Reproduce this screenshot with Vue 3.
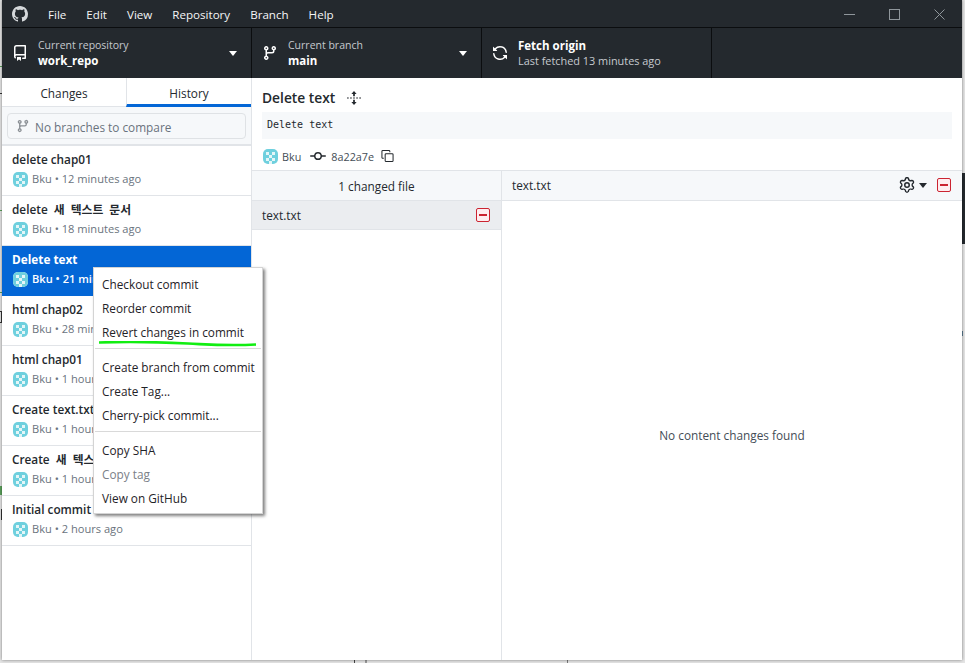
<script setup>
const commits = [
  { title: 'delete chap01', meta: '12 minutes ago' },
  { title: 'delete 새 텍스트 문서', meta: '18 minutes ago', ko: true },
  { title: 'Delete text', meta: '21 minutes ago', selected: true },
  { title: 'html chap02', meta: '28 minutes ago' },
  { title: 'html chap01', meta: '1 hour ago' },
  { title: 'Create text.txt', meta: '1 hour ago' },
  { title: 'Create 새 텍스트 문서', meta: '1 hour ago', ko: true },
  { title: 'Initial commit', meta: '2 hours ago' }
]
const menus = ['File', 'Edit', 'View', 'Repository', 'Branch', 'Help']
const avatarCells = [
  [1,1,1,1,1],
  [1,0,1,0,1],
  [1,1,0,1,1],
  [1,0,1,0,1],
  [1,1,0,1,1]
]
const groups = [
  [{ t: 'Checkout commit' }, { t: 'Reorder commit' }, { t: 'Revert changes in commit', mark: true }],
  [{ t: 'Create branch from commit' }, { t: 'Create Tag...' }, { t: 'Cherry-pick commit...' }],
  [{ t: 'Copy SHA' }, { t: 'Copy tag', off: true }, { t: 'View on GitHub' }]
]
const behind = [
  { x: 0, y: 66, w: 2, h: 1, c: '#5aa05a' },
  { x: 0, y: 93, w: 2, h: 1, c: '#333' },
  { x: 0, y: 210, w: 2, h: 1, c: '#5aa05a' },
  { x: 0, y: 292, w: 2, h: 1, c: '#5aa05a' },
  { x: 0, y: 311, w: 2, h: 1, c: '#333' },
  { x: 1, y: 311, w: 1, h: 11, c: '#333' },
  { x: 0, y: 322, w: 2, h: 1, c: '#333' },
  { x: 0, y: 486, w: 2, h: 9, c: '#5aa05a' },
  { x: 1, y: 509, w: 1, h: 11, c: '#333' },
  { x: 962, y: 173, w: 3, h: 71, c: '#24292e' },
  { x: 962, y: 331, w: 1, h: 5, c: '#5a7a90' },
  { x: 354, y: 660, w: 1, h: 3, c: '#444' },
  { x: 365, y: 660, w: 2, h: 3, c: '#999' },
  { x: 567, y: 660, w: 1, h: 3, c: '#777' }
]
</script>

<template>
  <div class="screen">
    <span v-for="(b, i) in behind" :key="i" class="behind" :style="{ left: b.x + 'px', top: b.y + 'px', width: b.w + 'px', height: b.h + 'px', background: b.c }"></span>
    <div class="window">
      <header class="titlebar">
        <svg class="logo" viewBox="0 0 16 16" width="16" height="16"><path fill="#d5d8db" d="M8 0C3.58 0 0 3.58 0 8c0 3.54 2.29 6.53 5.47 7.59.4.07.55-.17.55-.38 0-.19-.01-.82-.01-1.49-2.01.37-2.53-.49-2.69-.94-.09-.23-.48-.94-.82-1.13-.28-.15-.68-.52-.01-.53.63-.01 1.08.58 1.23.82.72 1.21 1.87.87 2.33.66.07-.52.28-.87.51-1.07-1.78-.2-3.64-.89-3.64-3.95 0-.87.31-1.59.82-2.15-.08-.2-.36-1.02.08-2.12 0 0 .67-.21 2.2.82.64-.18 1.32-.27 2-.27s1.36.09 2 .27c1.53-1.04 2.2-.82 2.2-.82.44 1.1.16 1.92.08 2.12.51.56.82 1.27.82 2.15 0 3.07-1.87 3.75-3.65 3.95.29.25.54.73.54 1.48 0 1.07-.01 1.93-.01 2.2 0 .21.15.46.55.38A8.01 8.01 0 0016 8c0-4.42-3.58-8-8-8z"/></svg>
        <nav class="menus"><span v-for="m in menus" :key="m">{{ m }}</span></nav>
        <div class="winctl">
          <svg width="11" height="11" viewBox="0 0 11 11"><path d="M0 5.500h11" stroke="#8f969b" fill="none"/></svg>
          <svg width="11" height="11" viewBox="0 0 11 11"><rect x=".5" y=".5" width="10" height="10" stroke="#8f969b" fill="none"/></svg>
          <svg width="11" height="11" viewBox="0 0 11 11"><path d="M.5.500l10 10M10.500.500l-10 10" stroke="#8f969b" fill="none"/></svg>
        </div>
      </header>

      <div class="toolbar">
        <div class="tool wide">
          <svg class="tool-icon" viewBox="0 0 16 16" width="16" height="16"><path fill="#fff" fill-rule="evenodd" d="M2 2.5A2.5 2.5 0 014.5 0h8.75a.75.75 0 01.75.75v12.5a.75.75 0 01-.75.75h-2.5a.75.75 0 110-1.5h1.75v-2h-8a1 1 0 00-.714 1.7.75.75 0 01-1.072 1.05A2.495 2.495 0 012 11.5v-9zm10.5-1V9h-8c-.356 0-.694.074-1 .208V2.5a1 1 0 011-1h8zM5 12.25v3.25a.25.25 0 00.4.2l1.45-1.087a.25.25 0 01.3 0L8.6 15.7a.25.25 0 00.4-.2v-3.25a.25.25 0 00-.25-.25h-3.5a.25.25 0 00-.25.25z"/></svg>
          <div class="tool-text"><small class="label">Current repository</small><b>work_repo</b></div>
          <i class="caret"></i>
        </div>
        <div class="tool wide">
          <svg class="tool-icon branch" viewBox="0 0 16 16" width="16" height="16"><path fill="#fff" fill-rule="evenodd" d="M11.75 2.5a.75.75 0 100 1.5.75.75 0 000-1.5zm-2.25.75a2.25 2.25 0 113 2.122V6A2.5 2.5 0 0110 8.5H6a1 1 0 00-1 1v1.128a2.251 2.251 0 11-1.5 0V5.372a2.25 2.25 0 111.5 0v1.836A2.492 2.492 0 016 7h4a1 1 0 001-1v-.628A2.25 2.25 0 019.5 3.25zM4.25 12a.75.75 0 100 1.5.75.75 0 000-1.5zM3.5 3.25a.75.75 0 111.5 0 .75.75 0 01-1.5 0z"/></svg>
          <div class="tool-text"><small class="label">Current branch</small><b>main</b></div>
          <i class="caret"></i>
        </div>
        <div class="tool fetch">
          <svg class="tool-icon" viewBox="0 0 16 16" width="16" height="16"><path fill="#fff" fill-rule="evenodd" d="M8 2.5a5.487 5.487 0 00-4.131 1.869l1.204 1.204A.25.25 0 014.896 6H1.25A.25.25 0 011 5.75V2.104a.25.25 0 01.427-.177l1.38 1.38A7.001 7.001 0 0114.95 7.16a.75.75 0 11-1.49.178A5.501 5.501 0 008 2.5zM1.705 8.005a.75.75 0 01.834.656 5.501 5.501 0 009.592 2.97l-1.204-1.204a.25.25 0 01.177-.427h3.646a.25.25 0 01.25.25v3.646a.25.25 0 01-.427.177l-1.38-1.38A7.001 7.001 0 011.05 8.84a.75.75 0 01.656-.834z"/></svg>
          <div class="tool-text"><b class="fetch-title">Fetch origin</b><small>Last fetched 13 minutes ago</small></div>
        </div>
      </div>

      <div class="body">
        <aside class="sidebar">
          <div class="tabs">
            <div class="tab">Changes</div>
            <div class="tab active">History</div>
          </div>
          <div class="filter">
            <div class="filter-box">
              <svg viewBox="0 0 16 16" width="14" height="14"><path fill="#8b9095" fill-rule="evenodd" d="M11.75 2.5a.75.75 0 100 1.5.75.75 0 000-1.5zm-2.25.75a2.25 2.25 0 113 2.122V6A2.5 2.5 0 0110 8.5H6a1 1 0 00-1 1v1.128a2.251 2.251 0 11-1.5 0V5.372a2.25 2.25 0 111.5 0v1.836A2.492 2.492 0 016 7h4a1 1 0 001-1v-.628A2.25 2.25 0 019.5 3.25zM4.25 12a.75.75 0 100 1.5.75.75 0 000-1.5zM3.5 3.25a.75.75 0 111.5 0 .75.75 0 01-1.5 0z"/></svg>
              <span>No branches to compare</span>
            </div>
          </div>
          <div class="commits">
            <div v-for="c in commits" :key="c.title" class="commit" :class="{ selected: c.selected }">
              <div class="commit-title" :class="{ ko: c.ko }">{{ c.title }}</div>
              <div class="commit-meta">
                <svg class="avatar" viewBox="0 0 5 5" width="15" height="15" shape-rendering="crispEdges">
                  <rect width="5" height="5" fill="#e4f6f8"/>
                  <template v-for="(row, y) in avatarCells" :key="y">
                    <rect v-for="(v, x) in row" v-show="v" :key="x" :x="x" :y="y" width="1" height="1" fill="#6fd0de"/>
                  </template>
                </svg>
                <span>Bku • {{ c.meta }}</span>
              </div>
            </div>
          </div>
        </aside>

        <main class="detail">
          <div class="summary">
            <div class="summary-title">
              <span>Delete text</span>
              <svg viewBox="0 0 16 16" width="14" height="14"><path fill="#24292e" d="M8 0l3 3.5H9V6H7V3.5H5zM8 16l-3-3.5h2V10h2v2.5h2z"/><path fill="#24292e" d="M0 7.5h2v1H0zM3.5 7.5h2v1h-2zM7 7.5h2v1H7zM10.500 7.500h2v1h-2zM14 7.500h2v1h-2z"/></svg>
            </div>
            <div class="summary-body">Delete text</div>
            <div class="summary-meta">
              <svg class="avatar meta-avatar" viewBox="0 0 5 5" width="15" height="15" shape-rendering="crispEdges">
                <rect width="5" height="5" fill="#e4f6f8"/>
                <template v-for="(row, y) in avatarCells" :key="y">
                  <rect v-for="(v, x) in row" v-show="v" :key="x" :x="x" :y="y" width="1" height="1" fill="#6fd0de"/>
                </template>
              </svg>
              <span class="who">Bku</span>
              <svg viewBox="0 0 16 16" width="16" height="16"><path fill="#24292e" fill-rule="evenodd" d="M10.5 8a2.5 2.5 0 11-5 0 2.500 2.500 0 015 0zm1.450.75a4 4 0 01-7.900 0H.75a.75.750 0 010-1.500h3.300a4 4 0 017.900 0h3.300a.75.750 0 010 1.500h-3.300z"/></svg>
              <span class="sha">8a22a7e</span>
              <svg class="copy" viewBox="0 0 14 14" width="13" height="14"><path fill="none" stroke="#24292e" stroke-width="1.100" d="M3 9.500H2a1 1 0 01-1-1V2a1 1 0 011-1h6.500a1 1 0 011 1v1"/><rect x="4.500" y="4.500" width="8.500" height="8.500" rx="1" fill="none" stroke="#24292e" stroke-width="1.100"/></svg>
            </div>
          </div>
          <div class="split">
            <div class="files">
              <div class="files-head"><span>1 changed file</span></div>
              <div class="file-row">
                <span>text.txt</span>
                <span class="removed"><i></i></span>
              </div>
            </div>
            <div class="diff">
              <div class="diff-head">
                <span>text.txt</span>
                <div class="diff-tools">
                  <svg viewBox="0 0 16 16" width="16" height="16"><path fill="#24292e" fill-rule="evenodd" d="M7.429 1.525a6.593 6.593 0 011.142 0c.036.003.108.036.137.146l.289 1.105c.147.560.550.967.997 1.189.174.086.341.183.501.290.417.278.970.423 1.530.27l1.102-.303c.110-.030.175.016.195.046.219.310.410.640.573.989.014.031.022.110-.059.190l-.815.806c-.411.406-.562.957-.530 1.456a4.588 4.588 0 010 .582c-.032.499.119 1.050.530 1.456l.815.806c.08.080.073.159.059.190a6.494 6.494 0 01-.573.990c-.020.029-.086.074-.195.045l-1.103-.303c-.559-.153-1.112-.008-1.529.270-.160.107-.327.204-.500.290-.449.222-.851.628-.998 1.189l-.289 1.105c-.029.110-.101.143-.137.146a6.613 6.613 0 01-1.142 0c-.036-.003-.108-.037-.137-.146l-.289-1.105c-.147-.560-.550-.967-.997-1.189a4.502 4.502 0 01-.501-.290c-.417-.278-.970-.423-1.530-.270l-1.102.303c-.110.030-.175-.016-.195-.046a6.492 6.492 0 01-.573-.989c-.014-.031-.022-.110.059-.190l.815-.806c.411-.406.562-.957.530-1.456a4.587 4.587 0 010-.582c.032-.499-.119-1.050-.530-1.456l-.815-.806c-.080-.080-.073-.159-.059-.190a6.440 6.440 0 01.573-.990c.020-.029.086-.075.195-.045l1.103.303c.559.153 1.112.008 1.529-.270.160-.107.327-.204.500-.290.449-.222.851-.628.998-1.189l.289-1.105c.029-.110.101-.143.137-.146zM8 0c-.236 0-.470.012-.701.036-.740.077-1.250.650-1.411 1.260l-.289 1.106c-.017.065-.074.139-.186.195a5.980 5.980 0 00-.663.383c-.104.070-.197.083-.261.066l-1.103-.303c-.610-.167-1.360-.020-1.790.580a7.992 7.992 0 00-.704 1.217c-.310.675-.067 1.400.380 1.843l.815.806c.048.047.083.134.075.260a6.100 6.100 0 000 .772c.008.126-.027.213-.075.260l-.815.806c-.447.443-.690 1.168-.380 1.843.197.430.433.836.704 1.217.430.600 1.180.747 1.790.580l1.103-.303c.064-.017.157-.004.261.066.210.141.432.269.663.383.112.056.170.130.186.195l.289 1.106c.161.610.671 1.183 1.411 1.260a8.094 8.094 0 001.402 0c.740-.077 1.250-.650 1.411-1.260l.289-1.106c.017-.065.074-.139.186-.195a5.980 5.980 0 00.663-.383c.104-.070.197-.083.261-.066l1.103.303c.610.167 1.360.020 1.790-.580.271-.381.507-.787.704-1.217.310-.675.067-1.400-.380-1.843l-.815-.806c-.048-.047-.083-.134-.075-.260a6.100 6.100 0 000-.772c-.008-.126.027-.213.075-.260l.815-.806c.447-.443.690-1.168.380-1.843a7.992 7.992 0 00-.704-1.217c-.430-.600-1.180-.747-1.790-.580l-1.103.303c-.064.017-.157.004-.261-.066a5.980 5.980 0 00-.663-.383c-.112-.056-.170-.130-.186-.195l-.289-1.106C9.951.686 9.441.113 8.701.036A8.094 8.094 0 008 0zm0 5a3 3 0 100 6 3 3 0 000-6zM6.500 8a1.500 1.500 0 113 0 1.500 1.500 0 01-3 0z"/></svg>
                  <i class="caret dark"></i>
                  <span class="removed"><i></i></span>
                </div>
              </div>
              <div class="diff-empty">No content changes found</div>
            </div>
          </div>
        </main>
      </div>

      <div class="menu">
        <div v-for="(g, gi) in groups" :key="gi" class="menu-group">
          <div v-for="item in g" :key="item.t" class="menu-item" :class="{ off: item.off }">
            {{ item.t }}
            <svg v-if="item.mark" class="scribble" viewBox="0 0 160 6" width="160" height="6"><path d="M1 1.500C30 .5 60 1 90 2.500S130 5 158 3.500" stroke="#12ee12" stroke-width="2.600" fill="none"/></svg>
          </div>
        </div>
      </div>
    </div>
  </div>
</template>

<style>
html, body { margin: 0; background: #e4e4e4; overflow: hidden; }
</style>

<style scoped>
.screen {
  position: relative;
  width: 965px;
  height: 663px;
  padding: 0 3px 3px 2px;
  box-sizing: border-box;
  background: #e4e4e4;
  font-family: "Open Sans", "Noto Sans CJK KR", sans-serif;
  font-size: 11.8px;
  color: #24292e;
  overflow: hidden;
}
.behind { position: absolute; }
.window { position: relative; height: 660px; display: flex; flex-direction: column; background: #fff; box-shadow: 0 0 3px rgba(0,0,0,.45); }
.titlebar {
  height: 28px; flex: none; box-sizing: border-box; display: flex; align-items: center; background: #24292e;
  border-bottom: 1px solid #0b0d0f; padding-left: 10px;
}
.logo { margin-top: 1px; }
.menus { display: flex; gap: 20px; margin-left: 20px; padding-top: 1px; font-size: 11.6px; color: #f4f5f6; }
.winctl { margin-left: auto; display: flex; gap: 34px; padding-right: 17px; padding-top: 1px; }
.toolbar { height: 50px; flex: none; display: flex; background: #24292e; color: #fff; }
.tool { display: flex; align-items: center; padding: 0 10px; border-right: 1px solid #0b0d0f; box-sizing: border-box; position: relative; }
.wide { width: 250px; }
.wide + .wide { width: 230px; }
.fetch { width: 230px; }
.tool-icon { flex: none; margin-right: 10px; }
.tool-text { display: flex; flex-direction: column; line-height: 15px; }
.tool-text small { font-size: 10.900px; color: #c6cace; }
.tool-text small.label { font-size: 10.500px; }
.tool-text b { font-weight: 700; font-size: 11.500px; }
.caret { position: absolute; right: 14px; top: 23px; width: 0; height: 0; border: 4px solid transparent; border-top: 5px solid #fff; border-bottom: 0; }
.caret.dark { position: static; border-top-color: #24292e; }
.body { flex: 1; display: flex; min-height: 0; }
.sidebar { width: 250px; box-sizing: border-box; flex: none; border-right: 1px solid #e1e4e8; display: flex; flex-direction: column; }
.tabs { display: flex; height: 29px; flex: none; }
.tab { flex: 1; display: flex; align-items: center; justify-content: center; border-bottom: 1px solid #e1e4e8; box-sizing: border-box; padding-top: 2px; }
.tab.active { border-left: 1px solid #e1e4e8; border-bottom: 3px solid #0366d6; padding-top: 3px; }
.filter { padding: 6px 5px 0; box-sizing: border-box; background: #f6f8fa; border-bottom: 2px solid #e1e4e8; height: 39px; flex: none; }
.filter-box { height: 26px; box-sizing: border-box; border: 1px solid #dfe2e5; border-radius: 4px; background: #f6f8fa; display: flex; align-items: center; padding-left: 8px; gap: 5px; color: #6a737d; }
.filter-box span { padding-top: 2px; }
.commits { display: flex; flex-direction: column; }
.commit { height: 50px; box-sizing: border-box; border-bottom: 1px solid #e1e4e8; padding: 4px 10px 0; }
.commit-title { line-height: 18px; font-weight: 600; color: #24292e; }
.commit-title.ko { word-spacing: 3px; }
.commit-meta { display: flex; align-items: center; gap: 4px; margin-top: 3px; padding-left: 1px; color: #6a737d; font-size: 11.100px; line-height: 16px; }
.avatar { flex: none; border-radius: 5px; filter: blur(.4px); }
.commit.selected { background: #0366d6; border-bottom-color: #0366d6; }
.commit.selected .commit-title { color: #fff; font-weight: 700; }
.commit.selected .commit-meta { color: #fff; font-weight: 600; }
.detail { flex: 1; display: flex; flex-direction: column; min-width: 0; }
.summary { flex: none; height: 92px; box-sizing: border-box; padding: 10px 10px 0; }
.summary-title { display: flex; align-items: center; gap: 12px; font-size: 13.800px; font-weight: 600; line-height: 20px; }
.summary-body { margin-top: 4px; height: 27px; background: #f6f8fa; font-family: "DejaVu Sans Mono", monospace; font-size: 10px; line-height: 25px; padding-left: 5px; }
.summary-meta { display: flex; align-items: center; height: 34px; gap: 4px; font-size: 10.800px; color: #444d56; }
.meta-avatar { margin-left: 1px; }
.who { margin-right: 5px; }
.sha { margin-left: 1px; margin-right: 3px; }
.split { flex: 1; display: flex; min-height: 0; border-top: 1px solid #e1e4e8; }
.files { width: 250px; box-sizing: border-box; flex: none; border-right: 1px solid #e1e4e8; }
.files-head { height: 30px; box-sizing: border-box; background: #f6f8fa; border-bottom: 1px solid #e1e4e8; display: flex; align-items: center; justify-content: center; }
.files-head span { padding-top: 1px; }
.file-row { height: 29px; box-sizing: border-box; background: #ebedf0; border-bottom: 1px solid #e1e4e8; display: flex; align-items: center; justify-content: space-between; padding: 0 11px 1px 10px; }
.removed { width: 14px; height: 14px; box-sizing: border-box; border: 1.500px solid #cb2431; border-radius: 2px; display: flex; align-items: center; justify-content: center; background: #ffeef0; }
.removed i { width: 8px; height: 2px; background: #cb2431; }
.diff { flex: 1; display: flex; flex-direction: column; min-width: 0; }
.diff-head { height: 30px; flex: none; box-sizing: border-box; background: #f6f8fa; border-bottom: 1px solid #e1e4e8; display: flex; align-items: center; justify-content: space-between; padding: 0 11px 1px 10px; }
.diff-tools { display: flex; align-items: center; gap: 4px; }
.diff-tools .removed { margin-left: 6px; }
.diff-empty { flex: 1; display: flex; align-items: center; justify-content: center; padding-top: 9px; font-size: 11.800px; color: #444d56; }
.menu {
  position: absolute; left: 91px; top: 267px; width: 170px; box-sizing: border-box;
  background: #fff; border: 1px solid #d4d4d4; box-shadow: 2px 2px 3px rgba(0,0,0,.5); padding: 0 0 2px;
}
.menu-group { padding: 6px 0 4px; border-bottom: 1px solid #d9d9d9; margin: 0 1px; }
.menu-group:first-child { padding-top: 4px; }
.menu-group:last-child { border-bottom: 0; padding-bottom: 1px; }
.menu-item { height: 24px; line-height: 24px; padding-left: 7px; position: relative; color: #1f2328; white-space: nowrap; }
.menu-item.off { color: #7a8087; }
.scribble { position: absolute; left: 3px; top: 21px; }
</style>
